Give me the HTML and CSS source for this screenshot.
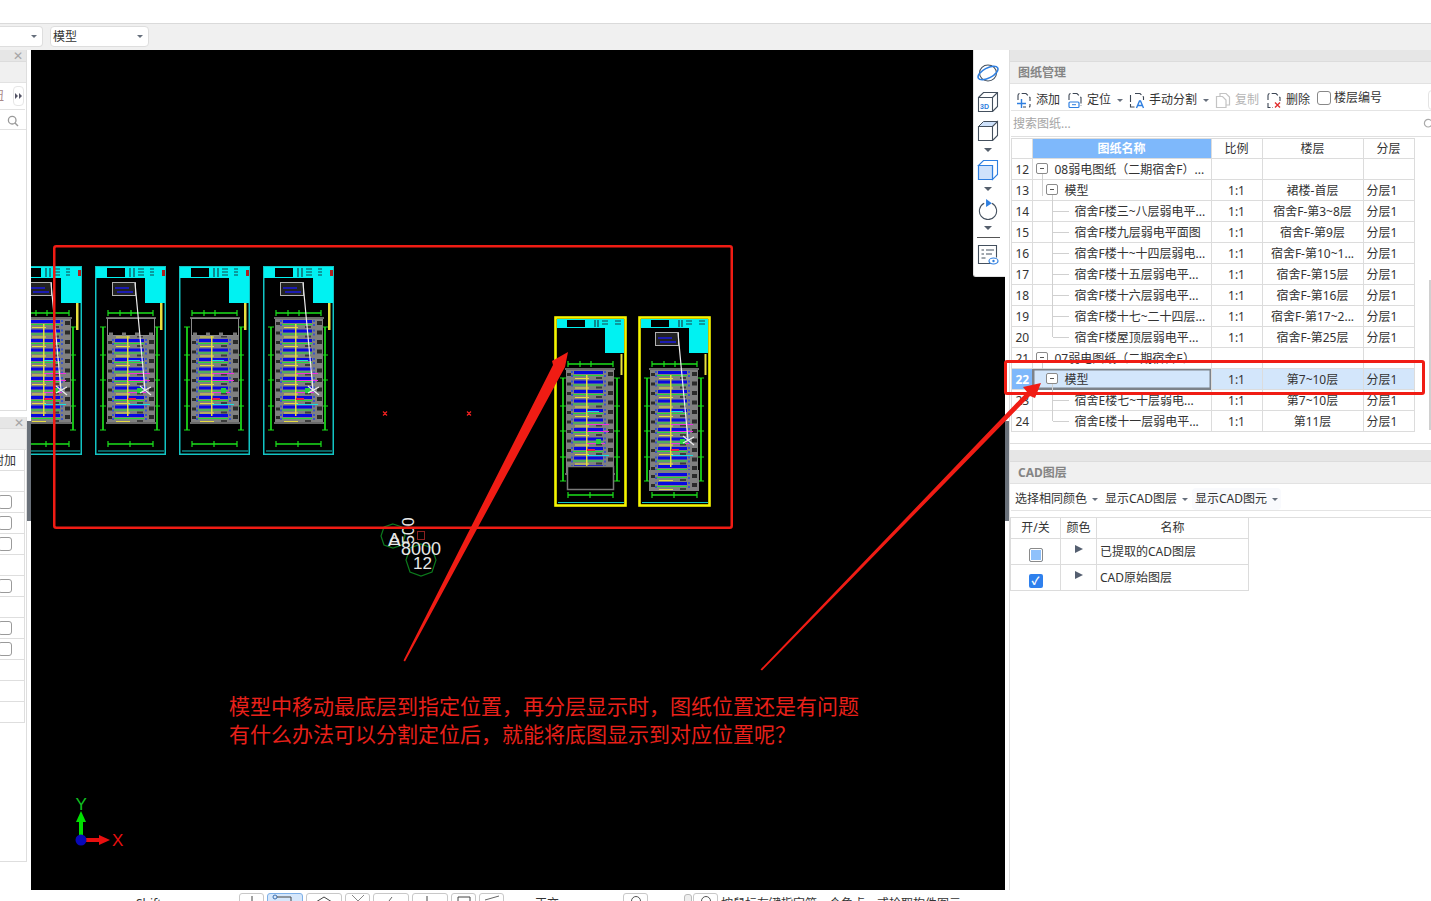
FILE: index.html
```html
<!DOCTYPE html>
<html lang="zh-CN">
<head>
<meta charset="utf-8">
<title>图纸管理</title>
<link rel="stylesheet" href="styles.css">
</head>
<body>
<div class="app">
  <div class="topbar"></div>
  <div class="selectors">
    <div class="select select-a"><span></span><i class="caret"></i></div>
    <div class="select select-b"><span>模型</span><i class="caret"></i></div>
  </div>

  <div class="main">
    <aside class="left">
      <section class="lp lp-one">
        <div class="strip"><span class="close">✕</span></div>
        <div class="lp-title"></div>
        <div class="lp-tools"><span class="clip-text">纽</span><span class="more"><i class="tri"></i><i class="tri"></i></span></div>
        <div class="lp-search">
          <svg class="ic-search" width="12" height="12" viewBox="0 0 12 12"><circle cx="5.2" cy="5.2" r="3.8" fill="none" stroke="#999" stroke-width="1.3"/><path d="M8 8l3 3" stroke="#999" stroke-width="1.4"/></svg>
        </div>
      </section>
      <section class="lp lp-two">
        <div class="strip"><span class="close">✕</span></div>
        <div class="lp-title"></div>
        <div class="lp-row lp-head"><span>附加</span></div>
        <div class="lp-row"></div>
        <div class="lp-row"><i class="lp-check"></i></div>
        <div class="lp-row"><i class="lp-check"></i></div>
        <div class="lp-row"><i class="lp-check"></i></div>
        <div class="lp-row"></div>
        <div class="lp-row"><i class="lp-check"></i></div>
        <div class="lp-row"></div>
        <div class="lp-row"><i class="lp-check"></i></div>
        <div class="lp-row"><i class="lp-check"></i></div>
        <div class="lp-row"></div>
        <div class="lp-row"></div>
        <div class="lp-row"></div>
      </section>
    </aside>

    <div class="gutter"><span class="grip"></span></div>

    <div class="canvas">
      <svg class="cad" width="974" height="840" viewBox="31 50 974 840">
        <defs>
          <g id="row">
            <rect x="1" y="2" width="4" height="3" fill="#2a2a2a"/>
            <rect x="42" y="1" width="5" height="4" fill="#2a2a2a"/>
            <rect x="5" y="0" width="2" height="2" fill="#3a55c8"/>
            <rect x="5" y="4" width="2" height="2" fill="#3a55c8"/>
            <rect x="38" y="0" width="2" height="2" fill="#3a55c8"/>
            <rect x="38" y="4" width="2" height="2" fill="#3a55c8"/>
            <rect x="8" y="0" width="29" height="3" fill="#0808e0"/>
            <rect x="7" y="4" width="30" height="1" fill="#20d838"/>
            <rect x="9" y="7" width="14" height="1" fill="#e8dc40"/>
            <rect x="30" y="6" width="6" height="2" fill="#3c3c3c"/>
          </g>
          <g id="plan">
            <rect x="0" y="0" width="48" height="105" fill="#808080"/>
            <use href="#row" y="2"/><use href="#row" y="11.500"/><use href="#row" y="21"/>
            <use href="#row" y="30.500"/><use href="#row" y="40"/><use href="#row" y="49.500"/>
            <use href="#row" y="59"/><use href="#row" y="68.500"/><use href="#row" y="78"/><use href="#row" y="87.500"/><use href="#row" y="96"/>
            <rect x="20" y="6" width="1.500" height="92" fill="#e8dc40"/>
            <rect x="21" y="42" width="12" height="1" fill="#18e0e0"/>
            <rect x="21" y="55" width="22" height="1" fill="#f030e0"/>
            <rect x="21" y="62" width="22" height="1" fill="#f030e0"/>
            <rect x="21" y="74" width="18" height="1" fill="#f030e0"/>
            <rect x="21" y="80" width="8" height="2" fill="#e02050"/>
            <rect x="21" y="86" width="22" height="1" fill="#18e0e0"/>
            <rect x="30" y="70" width="5" height="5" fill="#22d040"/>
            <rect x="-1" y="-1" width="50" height="2" fill="#6a6a6a"/>
            <rect x="-1" y="104" width="50" height="2" fill="#6a6a6a"/>
          </g>
          <g id="topbox"><rect x="12.500" y="52.500" width="47" height="17" fill="#000" stroke="#8a8a8a"/><path d="M14 68h4M27 68h4M40 68h4M54 68h4" stroke="#777" stroke-width="3"/></g>
          <g id="dims">
            <path d="M13 47H58M13 178H58M8 61V164M62 61V164" stroke="#1be01b" stroke-width="1.700" fill="none"/>
            <path d="M13 44v6M25 44v6M36 44v6M58 44v6M13 175v6M35 175v6M58 175v6M5 61h6M5 89h6M5 114h6M5 140h6M5 164h6M59 61h6M59 89h6M59 114h6M59 140h6M59 164h6" stroke="#1be01b" stroke-width="1.200"/>
          </g>
          <g id="leader">
            <rect x="17.500" y="16.500" width="23" height="13" fill="#222" stroke="#b0b0b0" stroke-width="1"/>
            <path d="M20 22h14M22 26h16" stroke="#1a1ae0" stroke-width="1.500"/>
            <path d="M40 17L50 124" stroke="#ececec" stroke-width="1.200"/>
            <path d="M45 127l11-6M45 120l11 9" stroke="#ececec" stroke-width="1.200"/>
          </g>
          <g id="sheet-c">
            <rect x=".75" y=".75" width="69.500" height="187.500" fill="none" stroke="#12c4c4" stroke-width="1.500"/>
            <path d="M3 185H69" stroke="#12c4c4"/>
            <rect x="1" y="1" width="69" height="11" fill="#00f2f2"/>
            <rect x="12" y="2" width="18" height="9" fill="#000"/>
            <path d="M35 2v9M39 2v9M43 3h6M43 6h6M43 9h6M55 3h4M55 6h4M55 9h4" stroke="#16424a" stroke-width="1.200"/>
            <rect x="67" y="4" width="3" height="6" fill="#b02020"/>
            <rect x="50" y="12" width="20" height="25" fill="#00f2f2"/>
            <rect x="65" y="37" width="2.500" height="27" fill="#e8e040"/>
            <use href="#dims"/>
            <use href="#plan" x="12" y="52"/>
          </g>
          <g id="sheet-y">
            <rect x="1.500" y="1.500" width="70" height="188" fill="#000" stroke="#f5f500" stroke-width="2.600"/>
            <rect x="3" y="3" width="67" height="9" fill="#00f2f2"/>
            <rect x="13" y="4" width="18" height="7" fill="#000"/>
            <path d="M41 4v7M44 4v7M48 5h6M48 8h6M61 5h6M61 8h6" stroke="#16424a" stroke-width="1.200"/>
            <rect x="51" y="12" width="19" height="25" fill="#00f2f2"/>
            <rect x="66.500" y="38" width="2" height="21" fill="#e8e040"/>
            <path d="M4 186.500H70" stroke="#12c4c4"/>
            <g transform="translate(1,1)"><use href="#dims"/></g>
          </g>
        </defs>

        <use href="#sheet-c" x="11" y="266"/><use href="#leader" x="11" y="266"/>
        <use href="#sheet-c" x="95" y="266"/><use href="#topbox" x="95" y="266"/><use href="#leader" x="95" y="266"/>
        <use href="#sheet-c" x="179" y="266"/><use href="#topbox" x="179" y="266"/>
        <use href="#sheet-c" x="263" y="266"/><use href="#leader" x="263" y="266"/>

        <use href="#sheet-y" x="554" y="316"/>
        <use href="#plan" x="566" y="369"/>
        <rect x="567.500" y="466.500" width="46" height="23" fill="#000" stroke="#7a7a7a" stroke-width="1.500"/>
        <use href="#sheet-y" x="638" y="316"/>
        <use href="#plan" x="650" y="369"/>
        <rect x="649" y="470" width="50" height="21" fill="#808080"/>
        <use href="#row" x="650" y="473"/><use href="#row" x="650" y="482"/>
        <use href="#leader" x="638" y="316"/>

        <path d="M383 411.500l4 4M387 411.500l-4 4M467 411.500l4 4M471 411.500l-4 4" stroke="#f02020" stroke-width="1.200"/>

        <path d="M393 524l9 3 3 9-3 9-9 3-9-3-3-9 3-9zM421 544l11 4 4 12-4 12-11 4-11-4-4-12 4-12z" fill="none" stroke="#0c7a1c" stroke-width="1.200"/>
        <rect x="417.500" y="531.500" width="7" height="8" fill="none" stroke="#8a2020"/>
        <text class="cad-t" x="388" y="546" font-size="19">A</text>
        <text class="cad-t" x="401" y="555" font-size="18">8000</text>
        <text class="cad-t" x="413" y="569" font-size="17">12</text>
        <text class="cad-t" transform="translate(414,544) rotate(-90)" font-size="16">500</text>
        <text class="cad-t" transform="translate(399,546) rotate(-90)" font-size="13">D</text>

        <rect x="79" y="822" width="4" height="14" fill="#00e000"/>
        <path d="M81 811l5 11H76z" fill="#00e000"/>
        <rect x="85" y="838" width="16" height="4" fill="#e81010"/>
        <path d="M110 840l-11 5v-10z" fill="#e81010"/>
        <circle cx="81" cy="840" r="5.500" fill="#0808b8"/>
        <text class="axis-y" x="75.500" y="810" font-size="17">Y</text>
        <text class="axis-x" x="112" y="846" font-size="17">X</text>
      </svg>

      <div class="view-tools">
        <svg width="24" height="22" viewBox="0 0 24 22"><ellipse cx="12" cy="11" rx="8.500" ry="8" fill="none" stroke="#44505e" stroke-width="1.100"/><ellipse cx="12" cy="11" rx="11" ry="5" transform="rotate(-28 12 11)" fill="none" stroke="#2f7fe0" stroke-width="1.500"/></svg>
        <svg width="22" height="22" viewBox="0 0 22 22"><path d="M1.500 6.500h14v14h-14zM1.500 6.500l5-5h14v14l-5 5M15.500 6.500l5-5" fill="#fff" stroke="#44505e" stroke-width="1.100"/><text class="ic-3d" x="3" y="17.500">3D</text></svg>
        <svg width="22" height="22" viewBox="0 0 22 22"><path d="M1.500 6.500l5-5h14l-5 5z" fill="#cfe2fb" stroke="#44505e"/><path d="M1.500 6.500h14v14h-14zM15.500 6.500l5-5v14l-5 5" fill="#fff" stroke="#44505e" stroke-width="1.100"/></svg>
        <i class="down"></i>
        <svg width="22" height="22" viewBox="0 0 22 22"><path d="M1.500 6.500l5-5h14v14l-5 5V6.500z" fill="#fff" stroke="#2f7fe0" stroke-width="1.100"/><path d="M1.500 6.500h14v14h-14z" fill="#cfe2fb" stroke="#2f7fe0" stroke-width="1.200"/></svg>
        <i class="down"></i>
        <svg width="22" height="22" viewBox="0 0 22 23"><path d="M7 5.500a9 9 0 1 0 8 0" fill="none" stroke="#44505e" stroke-width="1.100"/><path d="M9 1l6 4.500-6 4z" fill="#2f7fe0"/></svg>
        <i class="down"></i>
        <hr class="view-sep">
        <svg width="22" height="22" viewBox="0 0 22 22"><path d="M15 19.500H1.500V1.500h18v12" fill="none" stroke="#44505e" stroke-width="1.100"/><path d="M4.500 6h2.500M9 6h8M4.500 10h2.500M9 10h6M4.500 14h4" stroke="#44505e"/><ellipse cx="16.500" cy="17" rx="4.500" ry="3" fill="#fff" stroke="#2f7fe0" stroke-width="1.200"/><circle cx="16.500" cy="17" r="1.200" fill="#2f7fe0"/></svg>
      </div>
    </div>

    <div class="gutter"><span class="grip grip-r"></span></div>

    <aside class="right">
      <section class="drawings">
        <div class="strip"></div>
        <h2 class="rp-title">图纸管理</h2>
        <div class="rp-tools main-tools">
          <span class="tool"><svg width="16" height="17" viewBox="0 0 16 17"><path d="M2 8V3.500q0-2 2-2h6l4 4V9M7 15h3M14 12v2q0 1-1 1" fill="none" stroke="#3c4654" stroke-width="1.100" stroke-dasharray="7 2"/><path d="M1 11.500h9M5.500 7v9" stroke="#2f7fe0" stroke-width="1.400"/></svg>添加</span>
          <span class="tool t-caret"><svg width="16" height="17" viewBox="0 0 16 17"><path d="M2 8V3.500q0-2 2-2h6l4 4V14" fill="none" stroke="#3c4654" stroke-width="1.100" stroke-dasharray="7 2"/><rect x="2" y="10" width="10" height="5.500" rx="1" fill="#fff" stroke="#2f7fe0" stroke-width="1.200"/><path d="M5 12.700h4" stroke="#2f7fe0"/></svg>定位<i class="caret"></i></span>
          <span class="tool t-caret"><svg width="16" height="17" viewBox="0 0 16 17"><path d="M6 1.500h5l3.500 3.500v3M1.500 3v12h4" fill="none" stroke="#3c4654" stroke-width="1.100" stroke-dasharray="7 2"/><path d="M7.500 16l3-7h1l3 7M9 13.500h4" fill="none" stroke="#2f7fe0" stroke-width="1.400"/></svg>手动分割<i class="caret"></i></span>
          <span class="tool t-off"><svg width="16" height="17" viewBox="0 0 16 17"><path d="M5 4V1.500h6L14.500 5v8H11" fill="none" stroke="#c4c4c4" stroke-width="1.200"/><path d="M1.500 4.500h6L11 8v7.500H1.500z" fill="#fff" stroke="#c4c4c4" stroke-width="1.200"/></svg>复制</span>
          <span class="tool"><svg width="16" height="17" viewBox="0 0 16 17"><path d="M2 8V3.500q0-2 2-2h6l4 4V9M2 11v4.500h5" fill="none" stroke="#3c4654" stroke-width="1.100" stroke-dasharray="7 2"/><path d="M9 10.500l5 5M14 10.500l-5 5" stroke="#e03030" stroke-width="1.400"/></svg>删除</span>
          <label class="floor-no"><i class="box"></i>楼层编号</label>
          <span class="edge-btn"></span>
        </div>
        <div class="rp-search"><span>搜索图纸...</span>
          <svg width="12" height="12" viewBox="0 0 12 12"><circle cx="5.200" cy="5.200" r="3.800" fill="none" stroke="#aaa" stroke-width="1.200"/><path d="M8 8l3 3" stroke="#aaa" stroke-width="1.300"/></svg>
        </div>
        <table class="sheet-table">
          <colgroup><col class="c-n"><col class="c-name"><col class="c-ratio"><col class="c-floor"><col class="c-split"></colgroup>
          <thead><tr><th></th><th class="th-on">图纸名称</th><th>比例</th><th>楼层</th><th>分层</th></tr></thead>
          <tbody>
            <tr><td class="n">12</td><td class="name lv0 down-line"><i class="exp"></i>08弱电图纸（二期宿舍F）...</td><td></td><td></td><td></td></tr>
            <tr><td class="n">13</td><td class="name lv1 down-line"><i class="exp"></i>模型</td><td class="c">1:1</td><td class="c">裙楼-首层</td><td>分层1</td></tr>
            <tr><td class="n">14</td><td class="name lv2">宿舍F楼三~八层弱电平...</td><td class="c">1:1</td><td class="c">宿舍F-第3~8层</td><td>分层1</td></tr>
            <tr><td class="n">15</td><td class="name lv2">宿舍F楼九层弱电平面图</td><td class="c">1:1</td><td class="c">宿舍F-第9层</td><td>分层1</td></tr>
            <tr><td class="n">16</td><td class="name lv2">宿舍F楼十~十四层弱电...</td><td class="c">1:1</td><td class="c">宿舍F-第10~1...</td><td>分层1</td></tr>
            <tr><td class="n">17</td><td class="name lv2">宿舍F楼十五层弱电平...</td><td class="c">1:1</td><td class="c">宿舍F-第15层</td><td>分层1</td></tr>
            <tr><td class="n">18</td><td class="name lv2">宿舍F楼十六层弱电平...</td><td class="c">1:1</td><td class="c">宿舍F-第16层</td><td>分层1</td></tr>
            <tr><td class="n">19</td><td class="name lv2">宿舍F楼十七~二十四层...</td><td class="c">1:1</td><td class="c">宿舍F-第17~2...</td><td>分层1</td></tr>
            <tr><td class="n">20</td><td class="name lv2 last">宿舍F楼屋顶层弱电平...</td><td class="c">1:1</td><td class="c">宿舍F-第25层</td><td>分层1</td></tr>
            <tr><td class="n">21</td><td class="name lv0 down-line"><i class="exp"></i>07弱电图纸（二期宿舍E）...</td><td></td><td></td><td></td></tr>
            <tr class="on"><td class="n">22</td><td class="name lv1 down-line cur"><i class="exp"></i>模型</td><td class="c">1:1</td><td class="c">第7~10层</td><td>分层1</td></tr>
            <tr><td class="n">23</td><td class="name lv2">宿舍E楼七~十层弱电...</td><td class="c">1:1</td><td class="c">第7~10层</td><td>分层1</td></tr>
            <tr><td class="n">24</td><td class="name lv2 last">宿舍E楼十一层弱电平...</td><td class="c">1:1</td><td class="c">第11层</td><td>分层1</td></tr>
          </tbody>
        </table>
        <span class="rp-scroll"></span>
      </section>

      <section class="layers">
        <div class="strip"></div>
        <h2 class="rp-title">CAD图层</h2>
        <div class="rp-tools layer-tools">
          <span class="ltool">选择相同颜色<i class="caret"></i></span>
          <span class="ltool">显示CAD图层<i class="caret"></i></span>
          <span class="ltool ltool-on">显示CAD图元<i class="caret"></i></span>
        </div>
        <div class="layer-area">
          <table class="layer-table">
            <colgroup><col class="l-on"><col class="l-col"><col class="l-name"></colgroup>
            <thead><tr><th>开/关</th><th>颜色</th><th>名称</th></tr></thead>
            <tbody>
              <tr><td class="c"><i class="cb cb-mix"></i></td><td class="c"><i class="play"></i></td><td>已提取的CAD图层</td></tr>
              <tr><td class="c"><i class="cb cb-on">✓</i></td><td class="c"><i class="play"></i></td><td>CAD原始图层</td></tr>
            </tbody>
          </table>
        </div>
      </section>
    </aside>
  </div>

  <footer class="status">
    <span class="st-text st-a">Shift</span>
    <span class="st-btn st-1"><svg width="12" height="8" viewBox="0 0 12 8"><path d="M6 2v6" stroke="#444"/></svg></span>
    <span class="st-btn st-2 st-sel"><svg width="28" height="8" viewBox="0 0 28 8"><circle cx="4" cy="3" r="2" fill="none" stroke="#3c70b0"/><path d="M6 3h14v5" fill="none" stroke="#444"/></svg></span>
    <span class="st-btn st-3"><svg width="20" height="8" viewBox="0 0 20 8"><path d="M2 8l8-5 8 5" fill="none" stroke="#444"/></svg></span>
    <span class="st-btn st-4"><svg width="16" height="8" viewBox="0 0 16 8"><path d="M2 1l6 6 6-6" fill="none" stroke="#888"/></svg></span>
    <span class="st-btn st-3"><svg width="20" height="8" viewBox="0 0 20 8"><path d="M8 7l3-4" stroke="#666"/></svg></span>
    <span class="st-btn st-3"><svg width="20" height="8" viewBox="0 0 20 8"><path d="M7 2v6" stroke="#444"/></svg></span>
    <span class="st-btn st-1"><svg width="16" height="8" viewBox="0 0 16 8"><path d="M2 3h12M2 3v5M14 3v5" fill="none" stroke="#444"/></svg></span>
    <span class="st-btn st-1"><svg width="18" height="8" viewBox="0 0 18 8"><path d="M2 6l14-4" stroke="#666"/></svg></span>
    <span class="st-text st-b">正交</span>
    <span class="st-btn st-5"><svg width="14" height="8" viewBox="0 0 14 8"><circle cx="7" cy="7" r="4.500" fill="none" stroke="#555"/></svg></span>
    <span class="st-mini"></span>
    <span class="st-btn st-1 st-last"><svg width="14" height="8" viewBox="0 0 14 8"><circle cx="7" cy="7" r="4.500" fill="none" stroke="#555"/></svg></span>
    <span class="st-text st-c">按鼠标左键指定第一个角点，或拾取构件图元</span>
  </footer>

  <svg class="marks" width="1431" height="901" viewBox="0 0 1431 901">
    <rect x="54.250" y="246.250" width="677.500" height="281.500" rx="2" fill="none" stroke="#f01c14" stroke-width="2.500"/>
    <rect x="1005.500" y="361.500" width="418" height="32" rx="1.500" fill="none" stroke="#f01c14" stroke-width="3"/>
    <path d="M403.500 660.500L553 365l-1-4 16-9-3 15L405 661.500z" fill="#f01c14"/>
    <path d="M760.500 669.500L1027 392l-4-5 18-4-6 15-5-2L762 670.500z" fill="#f01c14"/>
  </svg>
  <p class="note">模型中移动最底层到指定位置，再分层显示时，图纸位置还是有问题<br>有什么办法可以分割定位后，就能将底图显示到对应位置呢？</p>
</div>
</body>
</html>
```

FILE: styles.css
```css
* { box-sizing: border-box; }
html, body { margin: 0; padding: 0; background: #fff; }
body { font: 12px/16px "Noto Sans", "Noto Sans CJK SC", sans-serif; color: #333; }
i { font-style: normal; }

.app { position: relative; width: 1431px; height: 901px; overflow: hidden; display: grid; grid-template-rows: 24px 26px 840px 11px; }

.topbar { background: #fff; border-bottom: 1px solid #dadada; }

.selectors { background: #f0f0f0; display: flex; align-items: flex-start; gap: 7px; padding-top: 2px; }
.select { height: 21px; background: #fff; border: 1px solid #dedede; border-radius: 4px; display: flex; align-items: center; justify-content: space-between; padding: 0 5px 0 2px; }
.select-a { width: 43px; border-left: 0; border-radius: 0 4px 4px 0; }
.select-b { width: 99px; }
.caret { display: inline-block; flex: none; width: 0; height: 0; border: 3px solid transparent; border-top: 3px solid #666f7c; border-bottom: 0; }

.main { display: grid; grid-template-columns: 27px 4px 974px 4px 422px; min-height: 0; }

/* left panels */
.left { display: flex; flex-direction: column; gap: 6px; overflow: hidden; padding-bottom: 28px; }
.lp { width: 27px; border-right: 1px solid #dedede; overflow: hidden; border-bottom: 1px solid #dedede; }
.lp-one { height: 361px; }
.lp-two { flex: 1; }
.strip { height: 12px; background: #e6e6e6; border-bottom: 1px solid #dcdcdc; display: flex; justify-content: flex-end; align-items: center; }
.lp-one .strip { padding-right: 3px; }
.lp-two .strip { padding-right: 2px; }
.close { font-size: 12px; line-height: 11px; color: #a5a5a5; }
.lp-title { height: 21px; background: #f0f0f0; border-bottom: 1px solid #e2e2e2; }
.lp-tools { height: 27px; margin-right: 1px; border-bottom: 1px solid #e2e2e2; display: flex; align-items: center; justify-content: flex-end; gap: 9px; padding-right: 1px; }
.clip-text { color: #a88; margin-left: -8px; }
.more { width: 11px; height: 20px; border: 1px solid #e6e6e6; border-radius: 4px; display: flex; align-items: center; justify-content: center; gap: 1px; }
.tri { width: 0; height: 0; border: 3px solid transparent; border-left: 3px solid #556; border-right: 0; }
.lp-search { height: 20px; border-bottom: 1px solid #e2e2e2; display: flex; align-items: center; justify-content: flex-end; padding: 2px 7px 0 0; }
.lp-row { width: 25px; height: 21px; border-bottom: 1px solid #dedede; border-right: 1px solid #dedede; display: flex; align-items: center; justify-content: flex-end; overflow: hidden; padding-right: 13px; }
.lp-head { padding: 2px 8px 0 0; }
.lp-head span { white-space: nowrap; flex: none; }
.lp-check { flex: none; width: 14px; height: 14px; margin-right: -1px; border: 1px solid #9a9a9a; border-radius: 3px; }

.gutter { display: flex; align-items: flex-start; background: #fff; }
.grip { display: block; width: 4px; height: 100px; margin-top: 371px; background: #6a717a; }

/* canvas */
.canvas { position: relative; background: #000; display: flex; justify-content: flex-end; align-items: flex-start; overflow: hidden; }
.cad { position: absolute; left: 0; top: 0; }
.cad-t { font-family: "Liberation Sans", sans-serif; fill: #e8e8e8; }
.axis-y { font-family: "Liberation Sans", sans-serif; fill: #10c020; }
.axis-x { font-family: "Liberation Sans", sans-serif; fill: #e81010; }

.view-tools { position: relative; width: 32px; height: 227px; padding: 12px 3px 0 0; background: #fff; border-left: 1px solid #e2e2e2; border-bottom: 1px solid #e2e2e2; border-radius: 0 0 0 3px; display: flex; flex-direction: column; align-items: center; }
.view-tools svg { flex: none; }
.view-tools svg + svg { margin-top: 7px; }
.down { flex: none; width: 0; height: 0; margin: 6px 0 7px; border: 4px solid transparent; border-top: 4px solid #555f6c; border-bottom: 0; }
.view-sep { flex: none; width: 23px; height: 1px; margin: 0 0 6px; border: 0; background: #555; }
.ic-3d { font: 700 7px "Liberation Sans", sans-serif; fill: #2f7fe0; }

/* right */
.right { border-left: 1px solid #dedede; display: flex; flex-direction: column; min-width: 0; overflow: hidden; }
.rp-title { margin: 0; height: 22px; padding-left: 8px; background: #f0f0f0; border-bottom: 1px solid #e2e2e2; font-size: 12px; line-height: 21px; font-weight: 700; color: #858585; }
.drawings { position: relative; height: 394px; border-bottom: 1px solid #dedede; }
.rp-tools { height: 27px; border-bottom: 1px solid #e4e4e4; margin-left: 1px; display: flex; align-items: center; padding-left: 5px; }
.main-tools { padding: 6px 0 0 5px; }
.tool { display: inline-flex; align-items: center; gap: 4px; margin-right: 7px; flex: none; }
.t-caret { margin-right: 6px; }
.t-caret .caret { margin-left: 2px; }
.t-off { color: #b5b5b5; }
.floor-no { display: inline-flex; align-items: center; gap: 3px; margin-left: 0; margin-top: -5px; flex: none; }
.box { width: 14px; height: 14px; border: 1px solid #888; border-radius: 3px; }
.edge-btn { width: 12px; height: 20px; margin-left: 46px; border: 1px solid #e4e4e4; border-radius: 4px; flex: none; }
.rp-search { height: 26px; margin-left: 1px; border-bottom: 1px solid #e0e0e0; display: flex; align-items: center; justify-content: space-between; padding: 0 0 0 2px; color: #a5a5a5; }
.rp-search svg { margin-right: -4px; }

.sheet-table, .layer-table { border-collapse: collapse; table-layout: fixed; }
.sheet-table { width: 404px; margin: 1px 0 0 0.500px; }
.c-n { width: 21px; } .c-name { width: 179px; } .c-ratio { width: 51px; } .c-floor { width: 101px; } .c-split { width: 51px; }
.sheet-table th, .sheet-table td { height: 21px; border: 1px solid #dcdcdc; padding: 1px 0 0; font-weight: 400; white-space: nowrap; overflow: hidden; line-height: 16px; }
.sheet-table td { padding-left: 3px; }
.sheet-table th { height: 20px; }
.th-on { background: #7eb8fb; color: #fff; font-weight: 700 !important; }
.c { text-align: center; }
.sheet-table td.c { padding-left: 0; }
.sheet-table td.n { padding-left: 4px; }
.name { position: relative; }
.sheet-table td.lv0 { padding-left: 22px; overflow: visible; }
.sheet-table td.lv1 { padding-left: 32px; overflow: visible; }
.sheet-table td.lv2 { padding-left: 42px; overflow: visible; }
.exp { position: absolute; top: 4px; width: 12px; height: 11px; border: 1px solid #8a8a8a; border-radius: 2px; background: #fff; }
.exp::after { content: ""; position: absolute; left: 3px; top: 4px; width: 4px; height: 1px; background: #555; }
.lv0 .exp { left: 3px; }
.lv1 .exp { left: 13px; }
.down-line::before { content: ""; position: absolute; top: 15px; height: 22px; width: 1px; background: #d0d0d0; }
.lv0.down-line::before { left: 9px; }
.lv1.down-line::before { left: 19px; }
.lv2::before { content: ""; position: absolute; left: 19px; top: -1px; width: 1px; height: 22px; background: #d0d0d0; }
.lv2.last::before { height: 11px; }
.lv2::after { content: ""; position: absolute; left: 20px; top: 10px; width: 16px; height: 1px; background: #d0d0d0; }
.on td { background: #d3e6fb; }
.sheet-table .on td.n { background: #7eb8fb; color: #fff; font-weight: 700; }
.sheet-table .on td.cur { box-shadow: inset 0 0 0 1.500px #7d8289; outline: 1px solid #7d8289; outline-offset: -1px; }
.rp-scroll { position: absolute; right: 0; top: 230px; width: 2px; height: 150px; background: #d0d0d0; }

.layers { flex: 1; margin-top: 6px; }
.layer-tools { padding: 4px 0 0 4px; }
.ltool { display: inline-flex; align-items: center; gap: 5px; height: 22px; padding-right: 3px; margin-right: 4px; flex: none; }
.ltool-on { background: #f9fafd; padding-left: 3px; margin-left: -3px; border-radius: 4px; }
.layer-area { margin-top: 6px; border-top: 1px solid #dedede; }
.layer-table { width: 238px; }
.l-on { width: 50px; } .l-col { width: 36px; } .l-name { width: 152px; }
.layer-table th, .layer-table td { border: 1px solid #dcdcdc; border-top: 0; padding: 1px 0 0; font-weight: 400; }
.layer-table th { height: 20px; }
.layer-table td { height: 26px; padding-left: 3px; }
.layer-table td.c { padding: 0; }
.cb { display: inline-block; width: 14px; height: 14px; border-radius: 2px; vertical-align: middle; margin-top: 8px; }
.cb-mix { border: 1px solid #8a8a8a; background: #8fc1fb; box-shadow: inset 0 0 0 1px #fff; }
.cb-on { background: #2f80ed; color: #fff; font-size: 11px; line-height: 14px; text-align: center; font-weight: 700; }
.play { display: inline-block; width: 0; height: 0; margin-top: -6px; vertical-align: middle; border: 4px solid transparent; border-left: 8px solid #555f70; border-right: 0; }

/* status */
.status { background: #fff; display: flex; align-items: flex-start; overflow: hidden; padding-top: 4px; white-space: nowrap; }
.st-btn { flex: none; height: 24px; margin-top: -1px; margin-right: 3px; border: 1px solid #c8c8c8; border-radius: 3px; background: #fff; display: flex; justify-content: center; align-items: flex-start; }
.st-1, .st-4, .st-5 { width: 25px; }
.st-2, .st-3 { width: 36px; }
.st-sel { background: #d6e7fb; border-color: #7eb0e8; justify-content: flex-start; padding-left: 3px; }
.st-a { flex: none; width: 239px; padding-left: 136px; margin-top: 2px; }
.st-b { flex: none; width: 88px; margin: 2px 0 0 28px; }
.st-mini { flex: none; width: 8px; height: 20px; margin: 0 1px 0 33px; border: 1px solid #bbb; border-radius: 3px; background: #eee; }
.st-c { flex: none; margin-top: 2px; }

/* annotation overlay */
.marks { position: absolute; left: 0; top: 0; pointer-events: none; }
.note { position: absolute; left: 229px; top: 692px; margin: 0; font-size: 21px; line-height: 28px; color: #e8201a; white-space: nowrap; }
```
